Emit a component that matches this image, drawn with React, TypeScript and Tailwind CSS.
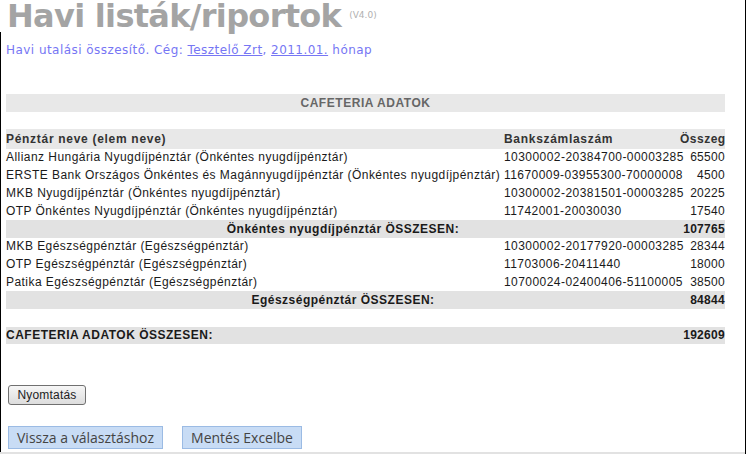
import React from "react"

type Row =
  | { kind: "item"; name: string; account: string; amount: string }
  | { kind: "subtotal"; label: string; amount: string }
  | { kind: "blank" }
  | { kind: "total"; label: string; amount: string }

const ROWS: Row[] = [
  { kind: "item", name: "Allianz Hungária Nyugdíjpénztár (Önkéntes nyugdíjpénztár)", account: "10300002-20384700-00003285", amount: "65500" },
  { kind: "item", name: "ERSTE Bank Országos Önkéntes és Magánnyugdíjpénztár (Önkéntes nyugdíjpénztár)", account: "11670009-03955300-70000008", amount: "4500" },
  { kind: "item", name: "MKB Nyugdíjpénztár (Önkéntes nyugdíjpénztár)", account: "10300002-20381501-00003285", amount: "20225" },
  { kind: "item", name: "OTP Önkéntes Nyugdíjpénztár (Önkéntes nyugdíjpénztár)", account: "11742001-20030030", amount: "17540" },
  { kind: "subtotal", label: "Önkéntes nyugdíjpénztár ÖSSZESEN:", amount: "107765" },
  { kind: "item", name: "MKB Egészségpénztár (Egészségpénztár)", account: "10300002-20177920-00003285", amount: "28344" },
  { kind: "item", name: "OTP Egészségpénztár (Egészségpénztár)", account: "11703006-20411440", amount: "18000" },
  { kind: "item", name: "Patika Egészségpénztár (Egészségpénztár)", account: "10700024-02400406-51100005", amount: "38500" },
  { kind: "subtotal", label: "Egészségpénztár ÖSSZESEN:", amount: "84844" },
  { kind: "blank" },
  { kind: "total", label: "CAFETERIA ADATOK ÖSSZESEN:", amount: "192609" },
]

const GRID = "grid grid-cols-[498px_176px_45px] items-center"

const TableRow = ({ row }: { row: Row }) => {
  if (row.kind === "blank") return <div className="h-[17.8px]" />

  if (row.kind === "item") {
    return (
      <div className={`${GRID} h-[17.8px] tracking-[0.45px] text-[#1a1a1a]`}>
        <span className="whitespace-nowrap">{row.name}</span>
        <span className="whitespace-nowrap">{row.account}</span>
        <span className="text-right tracking-[0.3px]">{row.amount}</span>
      </div>
    )
  }

  return (
    <div className={`${GRID} h-[17.8px] bg-[#e2e2e2] font-bold tracking-[0.5px] text-[#1a1a1a]`}>
      <span className={`col-span-2 whitespace-nowrap ${row.kind === "subtotal" ? "text-center" : ""}`}>
        {row.label}
      </span>
      <span className="text-right tracking-[0.3px]">{row.amount}</span>
    </div>
  )
}

export default function App() {
  return (
    <div className="relative flex h-[454px] w-[746px] flex-col overflow-hidden border-r border-black bg-white">
      {/* Title */}
      <div className="flex h-[32px] items-start pl-[7px]">
        <h1 className="font-['DejaVu_Sans',sans-serif] text-[32px] font-bold leading-[32px] tracking-[-0.7px] text-[#a4a4a4]">
          Havi listák/riportok
        </h1>
        <span className="ml-[8px] mt-[9px] font-['DejaVu_Sans',sans-serif] text-[9px] text-[#b0b0b0]">(V4.0)</span>
      </div>

      {/* Body */}
      <div className="flex flex-1 flex-col border-l border-black">
        <p className="mt-[11px] pl-[5px] font-['DejaVu_Sans',sans-serif] text-[12px] leading-[14px] tracking-[0.45px] text-[#7676f4]">
          Havi utalási összesítő. Cég: <span className="underline">Tesztelő Zrt</span>,{" "}
          <span className="underline">2011.01.</span> hónap
        </p>

        <div className="ml-[5px] mt-[37px] w-[719px] font-['Liberation_Sans',Arial,sans-serif] text-[12px] leading-[14px]">
          <div className="flex h-[17.6px] items-center justify-center bg-[#e8e8e8] font-bold tracking-[0.55px] text-[#666]">
            CAFETERIA ADATOK
          </div>
          <div className="h-[17px]" />
          <div className={`${GRID} h-[20px] bg-[#e8e8e8] font-bold tracking-[0.7px] text-[#333]`}>
            <span>Pénztár neve (elem neve)</span>
            <span>Bankszámlaszám</span>
            <span className="text-right tracking-[0.5px]">Összeg</span>
          </div>
          {ROWS.map((row, i) => (
            <TableRow key={i} row={row} />
          ))}
        </div>

        <div className="ml-[7px] mt-[37px]">
          <button className="h-[20px] w-[78px] rounded-[3px] border border-[#707070] bg-gradient-to-b from-[#f6f6f6] to-[#dddddd] font-['Liberation_Sans',Arial,sans-serif] text-[12px] leading-[18px] tracking-[0.2px] text-[#222]">
            Nyomtatás
          </button>
        </div>

        <div className="ml-[7px] mt-[21px] flex gap-[19px]">
          <button className="h-[23px] w-[155px] border border-[#9bbbe4] bg-[#c8dcf5] font-['Open_Sans',sans-serif] text-[14px] leading-[21px] text-[#444]">
            Vissza a választáshoz
          </button>
          <button className="h-[23px] w-[120px] border border-[#9bbbe4] bg-[#c8dcf5] font-['Open_Sans',sans-serif] text-[14px] leading-[21px] text-[#444]">
            Mentés Excelbe
          </button>
        </div>
      </div>

      <div className="h-[2px] bg-[#e2e2e2]" />
    </div>
  )
}
